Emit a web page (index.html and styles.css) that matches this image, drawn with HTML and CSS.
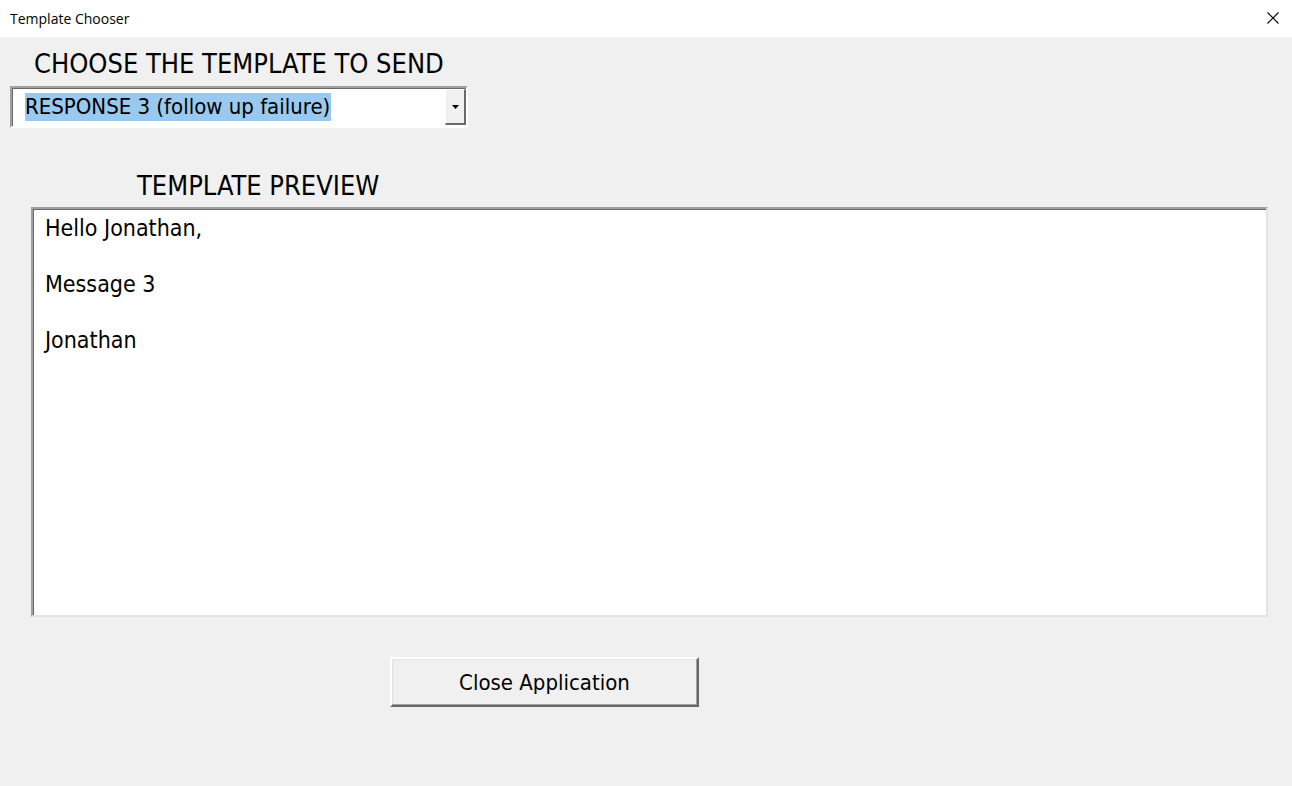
FILE: index.html
```html
<!DOCTYPE html>
<html lang="en">
<head>
  <meta charset="UTF-8">
  <title>Template Chooser</title>
  <link rel="stylesheet" href="styles.css">
</head>
<body>
  <div class="titlebar">
    <span class="title">Template Chooser</span>
    <span class="close-x">
      <svg width="12" height="12" viewBox="0 0 12 12"><path d="M0.5 0.5 L11.5 11.5 M11.5 0.5 L0.5 11.5" stroke="#000" stroke-width="1.1" fill="none"/></svg>
    </span>
  </div>

  <div class="form">
    <div class="label choose-label">CHOOSE THE TEMPLATE TO SEND</div>
    <div class="combo">
      <span class="combo-text"><span class="selected">RESPONSE 3 (follow up failure)</span></span>
      <span class="combo-btn">
        <svg width="7" height="4" viewBox="0 0 7 4"><path d="M0 0 H7 L3.5 4 Z" fill="#000"/></svg>
      </span>
    </div>

    <div class="label preview-label">TEMPLATE PREVIEW</div>
    <div class="preview">
      <p>Hello Jonathan,</p>
      <p>Message 3</p>
      <p>Jonathan</p>
    </div>

    <div class="actions">
      <button class="btn">Close Application</button>
    </div>
  </div>
</body>
</html>
```

FILE: styles.css
```css
body {
  margin: 0;
  background: #f0f0f0;
  font-family: "DejaVu Sans Condensed", "DejaVu Sans", sans-serif;
  color: #000;
}
.titlebar {
  height: 37px;
  background: #fff;
  display: flex;
  align-items: center;
  justify-content: space-between;
  padding: 0 13px 0 10px;
}
.title {
  font-family: "Open Sans", "Noto Sans", sans-serif;
  font-size: 14px;
  color: #000;
  margin-top: -1px;
}
.close-x {
  display: flex;
  margin-top: -1px;
}
.form {
  padding: 12px 0 0 10px;
}
.label {
  font-size: 27px;
  line-height: 30px;
}
.choose-label {
  margin-left: 24px;
  height: 38px;
}
.combo {
  width: 454px;
  height: 38px;
  background: #fff;
  border-top: 2px solid #a0a0a0;
  border-left: 2px solid #a0a0a0;
  border-right: 2px solid #fff;
  border-bottom: 2px solid #fff;
  box-shadow: inset 1px 1px 0 #696969;
  display: flex;
  align-items: center;
  justify-content: space-between;
  margin-top: -1px;
}
.combo-text {
  padding-left: 13px;
  font-size: 22px;
}
.selected {
  background: #99c9ef;
  display: inline-block;
  line-height: 28px;
  padding-right: 1px;
}
.combo-btn {
  background: #f0f0f0;
  border-top: 1px solid #fff;
  border-left: 1px solid #fff;
  border-right: 2px solid #696969;
  border-bottom: 2px solid #696969;
  display: flex;
  align-items: center;
  justify-content: center;
  box-sizing: border-box;
  width: 21px;
  height: 36px;
}
.preview-label {
  margin: 43px 0 0 127px;
  height: 36px;
}
.preview {
  margin-left: 21px;
  background: #fff;
  border-top: 2px solid #a0a0a0;
  border-left: 2px solid #a0a0a0;
  border-right: 2px solid #e3e3e3;
  border-bottom: 2px solid #e3e3e3;
  box-shadow: inset 1px 1px 0 #696969, inset -1px -1px 0 #fff;
  padding: 5px 0 0 12px;
  box-sizing: border-box;
  height: 410px;
  width: 1237px;
  font-size: 23px;
}
.preview p {
  margin: 0 0 28px;
  line-height: 28px;
}
.actions {
  margin: 40px 0 0 380px;
}
.btn {
  width: 309px;
  height: 50px;
  background: #f0f0f0;
  border-top: 2px solid #fff;
  border-left: 2px solid #fff;
  border-right: 2px solid #696969;
  border-bottom: 2px solid #696969;
  box-shadow: inset -1px -1px 0 #a0a0a0, inset 1px 1px 0 #e3e3e3;
  font-family: "DejaVu Sans Condensed", "DejaVu Sans", sans-serif;
  font-size: 22px;
  color: #000;
  padding: 0;
}
```
